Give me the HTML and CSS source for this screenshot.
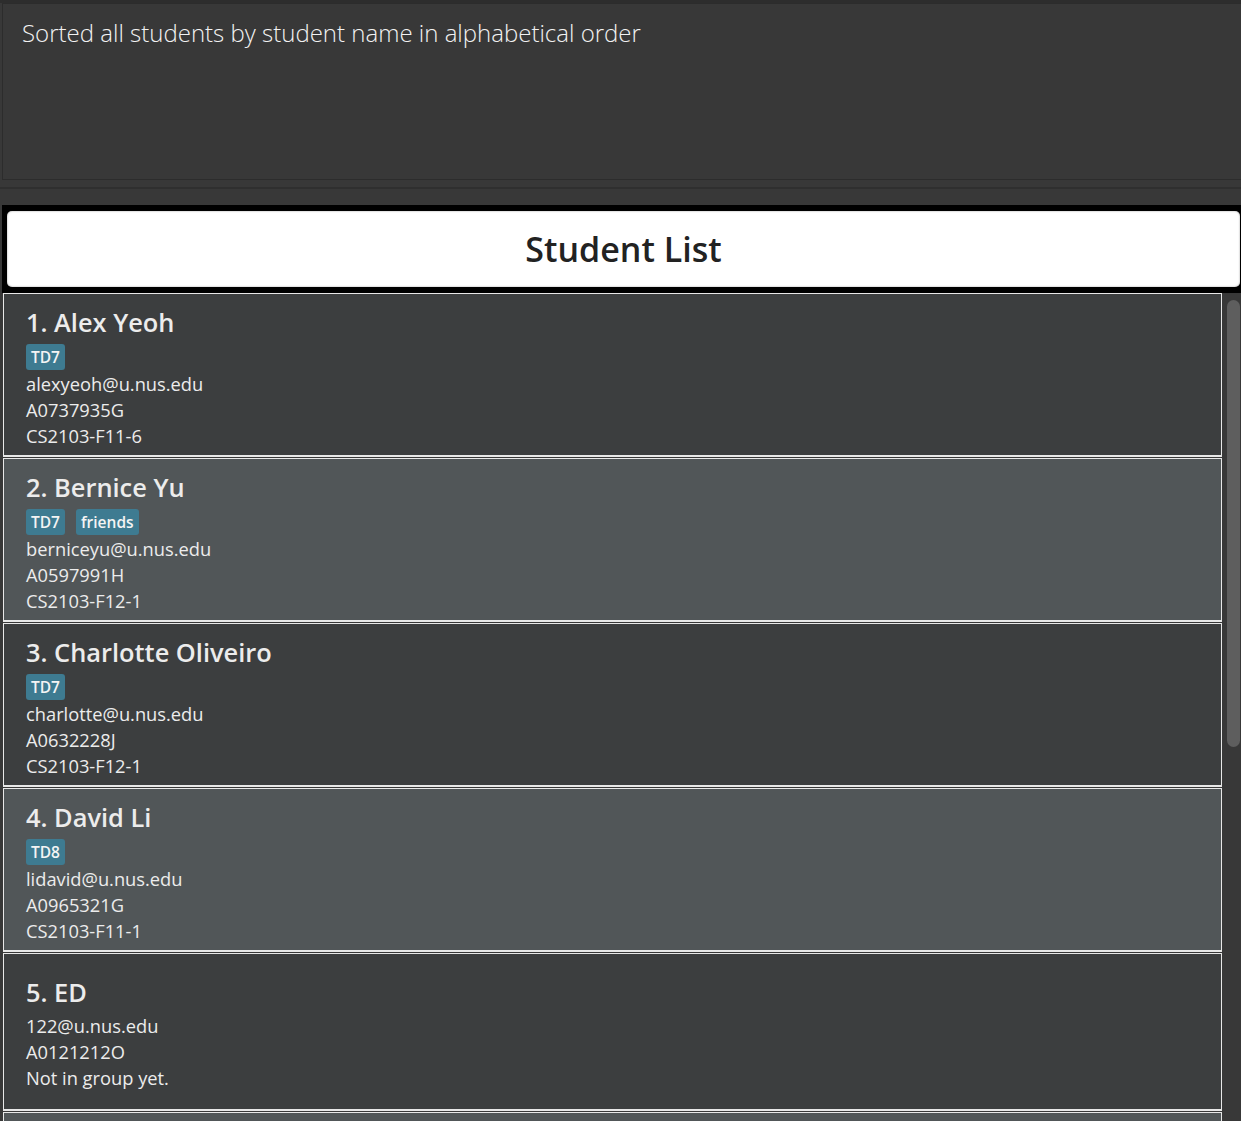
FILE: index.html
```html
<!DOCTYPE html>
<html lang="en">
<head>
<meta charset="utf-8">
<title>Student List</title>
<link rel="stylesheet" href="styles.css">
</head>
<body>
<div class="app">
  <div class="result-wrap">
    <div class="result-box">Sorted all students by student name in alphabetical order</div>
  </div>
  <div class="separator"></div>
  <div class="list-panel">
    <div class="list-header-wrap">
      <div class="list-header">Student List</div>
    </div>
    <div class="list-body">
      <div class="cards">
        <div class="card odd">
          <div class="name">1. Alex Yeoh</div>
          <div class="tags"><span class="tag">TD7</span></div>
          <div class="line">alexyeoh@u.nus.edu</div>
          <div class="line">A0737935G</div>
          <div class="line">CS2103-F11-6</div>
        </div>
        <div class="card even">
          <div class="name">2. Bernice Yu</div>
          <div class="tags"><span class="tag">TD7</span><span class="tag">friends</span></div>
          <div class="line">berniceyu@u.nus.edu</div>
          <div class="line">A0597991H</div>
          <div class="line">CS2103-F12-1</div>
        </div>
        <div class="card odd">
          <div class="name">3. Charlotte Oliveiro</div>
          <div class="tags"><span class="tag">TD7</span></div>
          <div class="line">charlotte@u.nus.edu</div>
          <div class="line">A0632228J</div>
          <div class="line">CS2103-F12-1</div>
        </div>
        <div class="card even">
          <div class="name">4. David Li</div>
          <div class="tags"><span class="tag">TD8</span></div>
          <div class="line">lidavid@u.nus.edu</div>
          <div class="line">A0965321G</div>
          <div class="line">CS2103-F11-1</div>
        </div>
        <div class="card odd compact">
          <div class="name">5. ED</div>
          <div class="line">122@u.nus.edu</div>
          <div class="line">A0121212O</div>
          <div class="line">Not in group yet.</div>
        </div>
        <div class="card even"></div>
      </div>
      <div class="scrollbar"><div class="thumb"></div></div>
    </div>
  </div>
</div>
</body>
</html>
```

FILE: styles.css
```css
* { box-sizing: border-box; }
html, body {
  margin: 0;
  padding: 0;
  height: 100%;
  overflow: hidden;
  background: #383838;
}
.app {
  font-family: "Open Sans", "Noto Sans", sans-serif;
  color: #eaeaea;
  border-top: 3px solid #2d2d2d;
}
.result-wrap {
  padding: 0 0 0 2px;
}
.result-box {
  height: 177px;
  border: 1px solid #2c2c2c;
  border-right: none;
  background: #383838;
  padding: 12px 0 0 19px;
  font-size: 24px;
  font-weight: 300;
  color: #f2f2f2;
}
.separator {
  height: 25px;
  border-top: 7px solid #383838;
  background: #383838;
}
.separator::before {
  content: "";
  display: block;
  height: 2px;
  background: #2f2f2f;
}
.list-panel {
  margin-left: 2px;
}
.list-header-wrap {
  background: #000;
  padding: 6px 1px 6px 5px;
}
.list-header {
  background: #fff;
  height: 76px;
  border-radius: 5px;
  box-shadow: inset 0 0 2px #999;
  display: flex;
  align-items: center;
  justify-content: center;
  font-size: 34px;
  font-weight: 600;
  color: #222;
}
.list-body {
  display: flex;
  background: #383838;
}
.cards {
  flex: 0 0 1220px;
  padding-left: 1px;
}
.card {
  border: 1px solid #e8e8e8;
  border-bottom-width: 2px;
  margin-bottom: 1px;
  height: 164px;
  padding: 11px 0 0 22px;
  display: flex;
  flex-direction: column;
}
.card.compact {
  height: 158px;
  padding-top: 21px;
}
.card.compact .name {
  margin-bottom: 4px;
}
.card.odd { background: #3c3e3f; }
.card.even { background: #515658; }
.name {
  font-size: 25.4px;
  font-weight: 600;
  line-height: 34px;
  margin-bottom: 3px;
  color: #ececec;
}
.tags {
  display: flex;
  gap: 11px;
  margin: 2px 0 1px;
}
.tag {
  background: #3e7b91;
  color: #f4f4f4;
  font-size: 15.5px;
  font-weight: 600;
  line-height: 26px;
  padding: 0 5px;
  border-radius: 3px;
}
.line {
  font-size: 18.3px;
  line-height: 26px;
  color: #ececec;
}
.scrollbar {
  flex: 1;
  padding: 7px 1px 0 5px;
}
.thumb {
  height: 447px;
  background: #5e5e5e;
  border-radius: 7px;
}
```
